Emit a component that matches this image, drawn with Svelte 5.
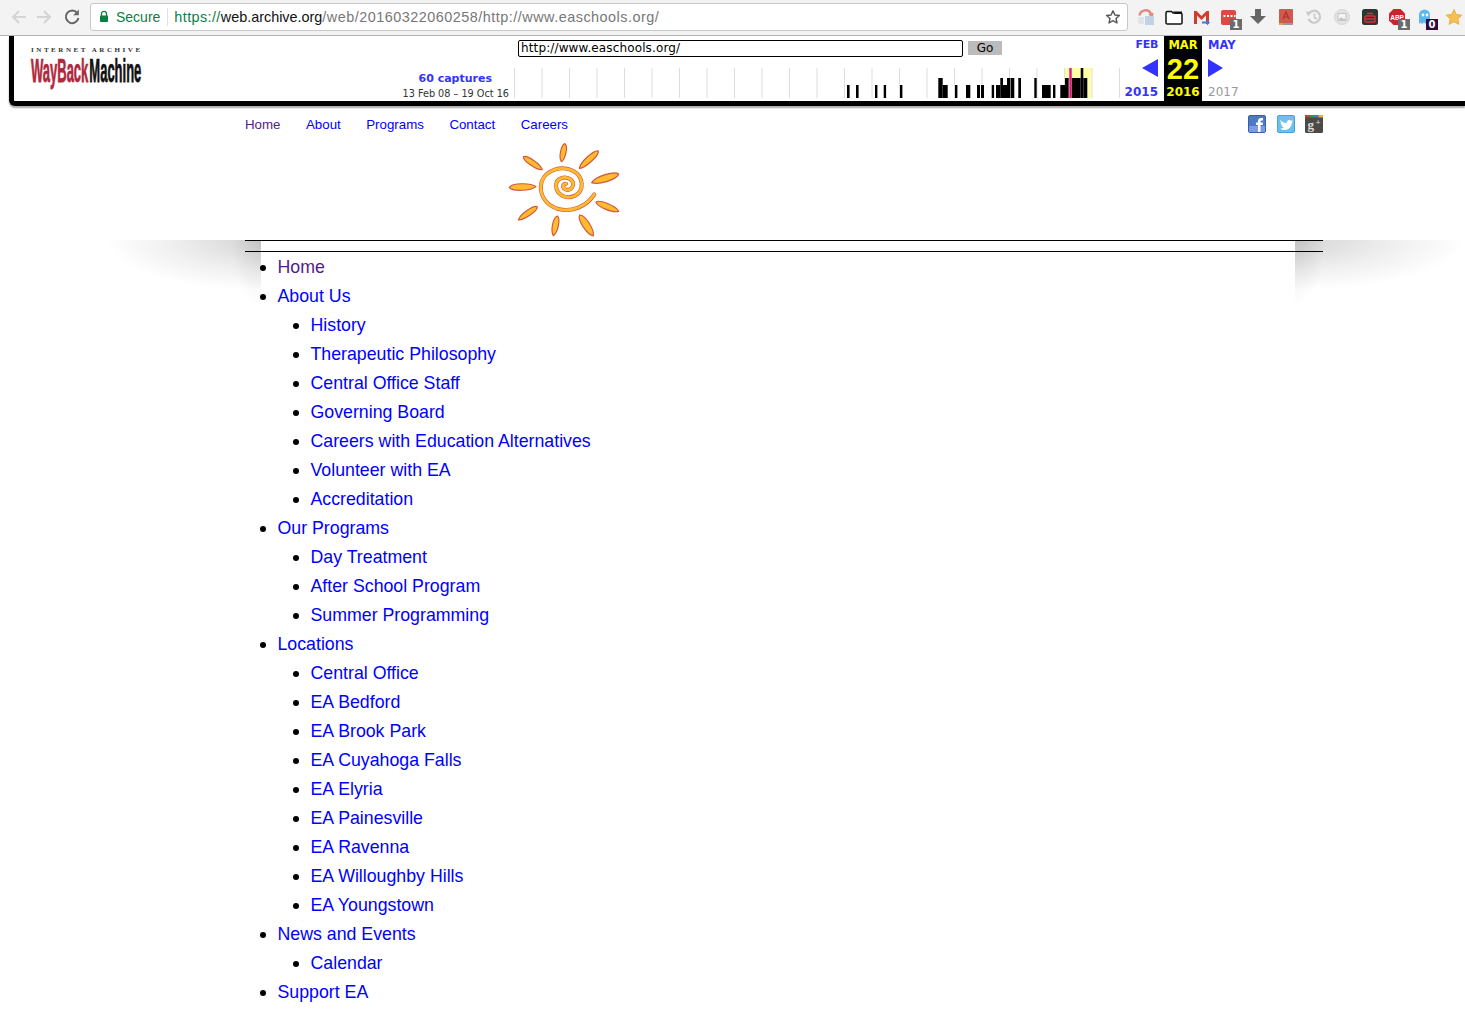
<script>
	const tree = [
		{ label: 'Home', visited: true },
		{ label: 'About Us', kids: ['History', 'Therapeutic Philosophy', 'Central Office Staff', 'Governing Board', 'Careers with Education Alternatives', 'Volunteer with EA', 'Accreditation'] },
		{ label: 'Our Programs', kids: ['Day Treatment', 'After School Program', 'Summer Programming'] },
		{ label: 'Locations', kids: ['Central Office', 'EA Bedford', 'EA Brook Park', 'EA Cuyahoga Falls', 'EA Elyria', 'EA Painesville', 'EA Ravenna', 'EA Willoughby Hills', 'EA Youngstown'] },
		{ label: 'News and Events', kids: ['Calendar'] },
		{ label: 'Support EA' }
	];

	const topNav = ['Home', 'About', 'Programs', 'Contact', 'Careers'];

	// capture bars: x, width, top (x is relative to the sparkline, bottom is always 30)
	const bars = [
		[333, 2.6, 17], [342, 2.6, 17], [361, 2.4, 17], [369.7, 2.4, 17], [386, 2.4, 17],
		[424.3, 4.4, 10], [428.7, 5, 17], [441, 2.4, 17], [452, 4.3, 17], [463, 3, 17], [467, 3, 17],
		[477.7, 2.4, 17], [482, 4.3, 17], [486.3, 2.7, 10], [489, 4, 17], [493, 3.5, 10], [497, 3.3, 10],
		[504.3, 2.7, 10], [520.3, 2.4, 10], [528, 8.7, 17], [539, 2.4, 17], [546.3, 4.7, 17],
		[551, 3.7, 10], [557.7, 9, 10], [566.7, 2.6, 0], [569.3, 4, 10]
	];
	const ticks = Array.from({ length: 23 }, (_, i) => i * 27.5);

	// sun rays, [x1, y1, x2, y2, fatness]
	const rays = [
		[225, 26, 214, 80, 11], [325, 48, 268, 100, 12], [386, 117, 305, 143, 14],
		[318, 201, 386, 229, 12], [269, 240, 310, 303, 14], [202, 243, 190, 302, 12],
		[142, 215, 85, 255, 11], [58, 157, 138, 155, 13], [100, 65, 157, 104, 11]
	];

	function rayPath([x1, y1, x2, y2, f]) {
		const dx = x2 - x1;
		const dy = y2 - y1;
		const len = Math.hypot(dx, dy);
		const nx = (-dy / len) * f;
		const ny = (dx / len) * f;
		const p = (t, s) => `${x1 + dx * t + nx * s} ${y1 + dy * t + ny * s}`;
		return `M${x1} ${y1}C${p(0.1, 1)} ${p(0.8, 1)} ${x2} ${y2}C${p(0.8, -1)} ${p(0.1, -1)} ${x1} ${y1}Z`;
	}

	const spiral = 'M313 178C290 215 245 232 205 222C165 210 145 175 155 140C168 105 215 90 250 108C280 125 285 165 255 182C228 195 200 180 198 152C198 130 225 120 243 134C257 148 245 168 228 164C217 160 216 147 228 146';
</script>

<div class="page">
	<header class="chrome">
		<svg class="navico" width="70" height="24" viewBox="0 0 70 24">
			<path d="M20 12H8M13 6l-6 6 6 6" fill="none" stroke="#d4d4d4" stroke-width="2" />
			<path d="M31 12h12M38 6l6 6-6 6" fill="none" stroke="#d4d4d4" stroke-width="2" />
		</svg>
		<svg class="reload" width="18" height="18" viewBox="0 0 18 18">
			<path d="M14.2 5A6.3 6.3 0 1 0 15.4 10" fill="none" stroke="#666" stroke-width="2" />
			<path d="M15.8 1.6V7.2H10.2Z" fill="#666" />
		</svg>
		<div class="omnibox">
			<svg width="10" height="13" viewBox="0 0 10 13">
				<path d="M2.5 6V3.8a2.5 2.5 0 0 1 5 0V6" fill="none" stroke="#0b8043" stroke-width="1.3" />
				<rect x="1" y="5.5" width="8" height="6.5" rx="0.8" fill="#0b8043" />
			</svg>
			<span class="secure">Secure</span>
			<span class="sep"></span>
			<span class="url"><span class="scheme">https://</span><span class="host">web.archive.org</span>/web/20160322060258/http://www.easchools.org/</span>
			<svg class="star" width="16" height="16" viewBox="0 0 16 16">
				<path d="M8 1.8l1.9 4.2 4.5.5-3.4 3 1 4.5L8 11.7 4 14l1-4.5-3.4-3 4.5-.5Z" fill="none" stroke="#555" stroke-width="1.4" stroke-linejoin="round" />
			</svg>
		</div>
		<div class="exts">
			<svg width="20" height="22" viewBox="0 0 20 22">
				<path d="M3.5 9.5A6 6 0 0 1 15 8" fill="none" stroke="#e0897c" stroke-width="2.4" />
				<path d="M12 8.5l5.5-2-.5 5Z" fill="#e0897c" />
				<rect x="2" y="11" width="6" height="7" rx="1" fill="#dfe4ea" />
				<rect x="9" y="10" width="9" height="9" fill="#c3d2e2" />
			</svg>
			<svg width="20" height="22" viewBox="0 0 20 22">
				<path d="M2 17V7q0-1.5 1.500-1.500h4l1.500 1.500h7.500q1.500 0 1.500 1.500V17q0 1-1.500 1h-13Q2 18 2 17Z" fill="#fff" stroke="#111" stroke-width="1.5" />
				<path d="M9 5.500h9V8H11Z" fill="#111" />
			</svg>
			<svg width="20" height="22" viewBox="0 0 20 22">
				<path d="M2 5h15v13H2Z" fill="#eee" />
				<path d="M2 5h2.500l5 5 5-5H17v13h-3V9.500l-4.500 4.500L5 9.500V18H2Z" fill="#d23a2d" />
				<path d="M10 15.500h5v-2l3 3-3 3v-2h-5Z" fill="#3f7fd0" />
			</svg>
			<div class="ext badged">
				<svg width="18" height="18" viewBox="0 0 18 18">
					<rect x="1" y="2" width="15" height="15" rx="2" fill="#dc4a44" />
					<path d="M3.500 7h2v2h-2ZM7 7h2v2H7ZM10.500 7h2v2h-2ZM14 7h1.500v2H14Z" fill="#fff" />
				</svg>
				<span class="badge">1</span>
			</div>
			<svg width="20" height="22" viewBox="0 0 20 22">
				<path d="M7 3h6v7h5l-8 8-8-8h5Z" fill="#666" />
			</svg>
			<svg width="20" height="22" viewBox="0 0 20 22">
				<rect x="3" y="3" width="14" height="15" rx="1" fill="#cf5a4e" />
				<path d="M7 13l3-7 3 7M8 11h4" fill="none" stroke="#a5342c" stroke-width="1.2" />
				<rect x="3" y="17" width="14" height="2" fill="#999" />
				<rect x="3" y="17" width="4" height="2" fill="#e8a33c" />
			</svg>
			<svg width="20" height="22" viewBox="0 0 20 22">
				<path d="M5 7.500A6 6 0 1 1 4.500 13" fill="none" stroke="#c8c8c8" stroke-width="2.200" />
				<path d="M2 5.500l5.500.5-3.500 4.500Z" fill="#c8c8c8" />
				<path d="M10.500 7.500v4l2.500 1.500" fill="none" stroke="#c8c8c8" stroke-width="1.600" />
			</svg>
			<svg width="20" height="22" viewBox="0 0 20 22">
				<circle cx="10" cy="11" r="7.500" fill="#e3e3e3" stroke="#d6d6d6" />
				<rect x="6" y="7.500" width="8" height="7" fill="#f4f4f4" stroke="#c4c4c4" />
				<path d="M6.500 14l2.500-3 2 2 1-1 1.500 2Z" fill="#c4c4c4" />
			</svg>
			<svg width="20" height="22" viewBox="0 0 20 22">
				<rect x="2" y="3" width="16" height="16" rx="2.500" fill="#333" />
				<rect x="5" y="10" width="10" height="6" rx="1" fill="none" stroke="#d6333a" stroke-width="1.500" />
				<path d="M7 7.500h6M6 13h8" stroke="#d6333a" stroke-width="1.500" />
			</svg>
			<div class="ext badged">
				<svg width="18" height="18" viewBox="0 0 18 18">
					<path d="M5.500 1h7L17 5.500v7L12.500 17h-7L1 12.500v-7Z" fill="#c9252c" />
					<text class="abp" x="2.200" y="11.500">ABP</text>
				</svg>
				<span class="badge">1</span>
			</div>
			<div class="ext badged">
				<svg width="18" height="18" viewBox="0 0 18 18">
					<path d="M3 16V7a5.500 5.500 0 0 1 11 0v9l-2-1.500L10 16l-2-1.500L6 16l-1.500-1.500Z" fill="#5db8ef" />
					<circle cx="7" cy="7" r="1.400" fill="#fff" />
					<circle cx="11" cy="7" r="1.400" fill="#fff" />
				</svg>
				<span class="badge dark">0</span>
			</div>
			<svg class="last" width="20" height="22" viewBox="0 0 20 22">
				<path d="M10 3.500l2.300 5 5.500.7-4 3.700 1.100 5.500L10 15.700 5.100 18.400l1.100-5.500-4-3.700 5.500-.7Z" fill="#f6bf55" stroke="#eeaf3c" />
			</svg>
		</div>
	</header>

	<section class="wayback">
		<div class="wb-logo">
			<div class="ia">INTERNET ARCHIVE</div>
			<div class="wb-word">
				<span class="wb red">WayBack</span>
				<span class="wb">Machine</span>
			</div>
		</div>

		<div class="wb-mid">
			<div class="wb-form">
				<div class="wb-input">http://www.easchools.org/</div>
				<div class="wb-go">Go</div>
			</div>
			<div class="wb-lower">
				<div class="wb-caps">
					<div class="cap-count">60 captures</div>
					<div class="cap-range">13 Feb 08 – 19 Oct 16</div>
				</div>
				<svg class="spark" width="606" height="30" viewBox="0 0 606 30">
					<rect x="551" y="0" width="26.700" height="30" fill="#ffffa8" />
					{#each ticks as t}
						<rect x={t} y="0" width="1" height="30" fill="#ddd" />
					{/each}
					{#each bars as [x, w, top]}
						<rect {x} y={top} width={w} height={30 - top} fill="#000" />
					{/each}
					<rect x="555.300" y="0" width="2.400" height="30" fill="#e6168a" />
				</svg>
			</div>
		</div>

		<div class="wb-dates">
			<div class="prev">
				<span class="m">FEB</span>
				<svg width="16" height="18" viewBox="0 0 16 18"><path d="M16 0V18L0 9Z" fill="#33f" /></svg>
				<span class="y">2015</span>
			</div>
			<div class="cur">
				<span class="m">MAR</span>
				<span class="d">22</span>
				<span class="y">2016</span>
			</div>
			<div class="next">
				<span class="m">MAY</span>
				<svg width="15" height="18" viewBox="0 0 15 18"><path d="M0 0V18L15 9Z" fill="#33f" /></svg>
				<span class="y gray">2017</span>
			</div>
		</div>
	</section>

	<main class="site">
		<div class="topbar">
			<nav class="topnav">
				{#each topNav as item, i}
					<a href="#top" class:visited={i === 0}>{item}</a>
				{/each}
			</nav>
			<div class="social">
				<svg width="18" height="18" viewBox="0 0 18 18">
					<rect x="0.500" y="0.500" width="17" height="17" rx="1.500" fill="#4f78c8" stroke="#3a5fa8" />
					<rect x="1" y="11" width="16" height="6" fill="#7d9cdb" />
					<path d="M10 17V10H8V7.500h2V6q0-3 3-3h2v2.500h-1.500Q12.500 5.500 12.500 6.500v1H15L14.600 10h-2.100v7Z" fill="#fff" />
				</svg>
				<svg width="18" height="18" viewBox="0 0 18 18">
					<rect x="0.500" y="0.500" width="17" height="17" rx="1.500" fill="#6cc0ea" stroke="#4ba3d2" />
					<path d="M3 5q3 3 6.500 3.300C9.300 5.500 12.300 4 14 5.800l1.800-.6-1 1.600 1.300-.2-1.300 1.300C15 12 11 15 7.500 15 5.500 15 4 14.300 3 13.500c1.500.1 3-.3 4-1.200-1.200 0-2.200-.7-2.600-1.800h1.300C4.500 10 3.600 9 3.600 7.700l1.200.3C3.600 7.200 3.100 6 3 5Z" fill="#fff" />
				</svg>
				<svg width="18" height="18" viewBox="0 0 18 18">
					<rect width="18" height="18" rx="1.500" fill="#4a4a46" />
					<rect width="4.500" height="2.500" fill="#d43c33" />
					<rect x="4.500" width="4.500" height="2.500" fill="#3f8f46" />
					<rect x="9" width="4.500" height="2.500" fill="#3f78d0" />
					<rect x="13.500" width="4.500" height="2.500" fill="#e3b52e" />
					<text class="gp" x="2.500" y="14">g</text>
					<text class="gp small" x="10.500" y="10">+</text>
				</svg>
			</div>
		</div>

		<div class="logo-row">
			<svg class="sun" width="150" height="110" viewBox="0 0 450 330">
				{#each rays as r}
					<path d={rayPath(r)} fill="#fdbb2d" stroke="#d2573f" stroke-width="3.500" stroke-linejoin="round" />
				{/each}
				<path d={spiral} fill="none" stroke="#d2573f" stroke-width="12" stroke-linecap="round" />
				<path d={spiral} fill="none" stroke="#fdbb2d" stroke-width="8.500" stroke-linecap="round" />
			</svg>
		</div>

		<div class="content">
			<div class="shadow left"></div>
			<div class="shadow right"></div>
			<hr />
			<hr class="second" />
			<ul class="tree">
				{#each tree as node}
					<li>
						<a href="#top" class:visited={node.visited}>{node.label}</a>
						{#if node.kids}
							<ul>
								{#each node.kids as kid}
									<li><a href="#top">{kid}</a></li>
								{/each}
							</ul>
						{/if}
					</li>
				{/each}
			</ul>
		</div>
	</main>
</div>

<style>
	:global(body) {
		margin: 0;
		background: #fff;
		font-family: 'Liberation Sans', Arial, sans-serif;
	}

	.page {
		width: 1465px;
		height: 1013px;
		overflow: hidden;
		display: flex;
		flex-direction: column;
	}

	/* browser bar */
	.chrome {
		flex: none;
		height: 35px;
		box-sizing: content-box;
		border-bottom: 1px solid #b4b4b4;
		background: #f3f3f3;
		display: flex;
		align-items: center;
	}

	.navico {
		flex: none;
		margin-left: 6px;
		margin-top: -1px;
	}

	.reload {
		flex: none;
		margin-left: -13px;
		margin-right: 9px;
		margin-top: -1px;
	}

	.omnibox {
		flex: none;
		box-sizing: border-box;
		width: 1038px;
		height: 28px;
		margin-top: -2px;
		padding: 0 6px 0 8px;
		background: #fff;
		border: 1px solid #c8c8c8;
		border-radius: 3px;
		display: flex;
		align-items: center;
		font-size: 14.400px;
	}

	.secure {
		color: #0b8043;
		margin-left: 7px;
		font-size: 14px;
	}

	.sep {
		width: 1px;
		height: 18px;
		background: #e2e2e2;
		margin: 0 6px 0 7px;
	}

	.url {
		color: #777;
		flex: 1;
		white-space: nowrap;
		letter-spacing: 0.500px;
	}

	.scheme {
		color: #0b8043;
		letter-spacing: 0.400px;
	}

	.host {
		color: #111;
		letter-spacing: 0;
	}

	.star {
		flex: none;
	}

	.exts {
		flex: none;
		display: flex;
		align-items: center;
		gap: 8px;
		margin-left: 8px;
		margin-top: -2px;
	}

	.ext {
		position: relative;
		width: 20px;
		height: 22px;
		display: flex;
		align-items: center;
	}

	.badge {
		position: absolute;
		right: -2px;
		bottom: -2px;
		width: 12px;
		height: 11px;
		background: #6b6b6b;
		color: #fff;
		font: bold 10px/11px 'DejaVu Sans', sans-serif;
		text-align: center;
	}

	.badge.dark {
		background: #2e0d3c;
	}

	.abp {
		font: bold 6.500px 'Liberation Sans', sans-serif;
		fill: #fff;
	}

	/* wayback toolbar */
	.wayback {
		flex: none;
		box-sizing: border-box;
		height: 70px;
		margin-left: 9px;
		border-left: 5px solid #000;
		border-bottom: 5px solid #000;
		border-bottom-left-radius: 6px;
		box-shadow: 0 2px 2px rgba(0, 0, 0, 0.35);
		background: #fff;
		display: flex;
		font-family: 'DejaVu Sans', Verdana, sans-serif;
	}

	.wb-logo {
		flex: none;
		width: 110px;
		margin-left: 17px;
		padding-top: 11px;
	}

	.ia {
		font: bold 7px/7px 'Liberation Serif', serif;
		color: #333;
		letter-spacing: 2.550px;
		white-space: nowrap;
	}

	.wb-word {
		display: flex;
		height: 28px;
		white-space: nowrap;
	}

	.wb {
		font: bold 13px/13px 'Liberation Sans', sans-serif;
		color: #111;
		-webkit-text-stroke: 0.3px currentColor;
		transform: scaleY(2.5);
		transform-origin: 0 0;
		display: block;
	}

	.wb.red {
		color: #b0283c;
		margin-right: 1px;
	}

	.wb-mid {
		flex: none;
		width: 602px;
		margin-left: 377px;
	}

	.wb-form {
		display: flex;
		gap: 5px;
		padding-top: 4px;
	}

	.wb-input {
		box-sizing: border-box;
		flex: none;
		width: 445px;
		height: 17px;
		border: 1px solid #000;
		border-radius: 2px;
		padding-left: 2px;
		font-size: 12px;
		letter-spacing: 0.130px;
		line-height: 15px;
		color: #000;
	}

	.wb-go {
		flex: none;
		width: 34px;
		height: 14px;
		margin-top: 1px;
		background: #bbb;
		color: #000;
		text-align: center;
		font-size: 12px;
		line-height: 15px;
	}

	.wb-lower {
		display: flex;
		margin-left: -118px;
		margin-top: 11px;
	}

	.wb-caps {
		box-sizing: border-box;
		width: 114px;
		flex: none;
		text-align: right;
		padding-right: 5px;
		margin-top: 2px;
		white-space: nowrap;
	}

	.cap-count {
		font-size: 11px;
		font-weight: bold;
		color: #33f;
		line-height: 17px;
		padding-right: 17px;
	}

	.cap-range {
		font-size: 9.700px;
		color: #333;
		line-height: 13px;
	}

	.spark {
		flex: none;
	}

	.wb-dates {
		display: flex;
		height: 65px;
		font-size: 12px;
		font-weight: bold;
		color: #33f;
	}

	.wb-dates > div {
		display: flex;
		flex-direction: column;
		height: 65px;
	}

	.prev {
		width: 38px;
		align-items: flex-end;
		padding-right: 6px;
	}

	.next {
		padding-left: 6px;
		align-items: flex-start;
	}

	.cur {
		width: 38px;
		background: #000;
		color: #ff0;
		align-items: center;
	}

	.m {
		line-height: 18px;
		height: 18px;
		font-size: 11.500px;
	}

	.prev .m {
		font-size: 11px;
		letter-spacing: -0.300px;
	}

	.prev svg,
	.next svg {
		margin-top: 5px;
		margin-bottom: 5px;
	}

	.d {
		font: bold 29px/28px 'Liberation Sans', Arial, sans-serif;
		height: 28px;
		margin-top: 1px;
	}

	.y {
		line-height: 16px;
		margin-top: auto;
		margin-bottom: 1px;
	}

	.y.gray {
		color: #999;
		font-weight: normal;
	}

	/* site */
	.site {
		flex: 1;
		min-height: 0;
	}

	.topbar {
		display: flex;
		justify-content: space-between;
		align-items: flex-start;
		width: 1078px;
		margin-left: 245px;
		height: 37px;
		padding-top: 9px;
		box-sizing: border-box;
	}

	.topnav {
		display: flex;
		gap: 25.500px;
		margin-top: 1px;
		font-size: 13.300px;
		line-height: 18px;
	}

	a {
		color: #00f;
		text-decoration: none;
	}

	a.visited {
		color: #551a8b;
	}

	.social {
		display: flex;
		gap: 10.500px;
	}

	.gp {
		font: bold 13px 'Liberation Serif', serif;
		fill: #ddd;
	}

	.gp.small {
		font-size: 9px;
	}

	.logo-row {
		height: 102px;
		margin-left: 490px;
		margin-top: -8px;
	}

	.sun {
		display: block;
	}

	.content {
		position: relative;
		margin-top: 3px;
		margin-left: 245px;
		width: 1078px;
		font-size: 17.750px;
		line-height: 29px;
	}

	hr {
		margin: 0;
		border: 0;
		border-top: 1px solid #000;
		position: relative;
		z-index: 1;
	}

	hr.second {
		margin-top: 10px;
	}

	.shadow {
		position: absolute;
		top: 0;
		height: 68px;
	}

	.shadow.left {
		left: -140px;
		width: 156px;
		background:
			radial-gradient(ellipse 30px 66px at 100% 0, rgba(0, 0, 0, 0.09), transparent),
			radial-gradient(ellipse 156px 50px at 100% 0, rgba(0, 0, 0, 0.17), rgba(0, 0, 0, 0.06) 60%, transparent);
	}

	.shadow.right {
		right: -142px;
		width: 170px;
		background:
			radial-gradient(ellipse 30px 66px at 0 0, rgba(0, 0, 0, 0.09), transparent),
			radial-gradient(ellipse 170px 50px at 0 0, rgba(0, 0, 0, 0.17), rgba(0, 0, 0, 0.06) 60%, transparent);
	}

	.tree {
		position: relative;
		margin: 0;
		padding: 1px 0 0 32.500px;
		list-style: none;
	}

	.tree ul {
		margin: 0;
		padding: 0 0 0 33px;
		list-style: none;
	}

	.tree li {
		position: relative;
	}

	/* bullets are a bit bigger here than the default disc */
	.tree li::before {
		content: '';
		position: absolute;
		left: -17.500px;
		top: 12px;
		width: 6px;
		height: 6px;
		border-radius: 50%;
		background: #000;
	}
</style>
